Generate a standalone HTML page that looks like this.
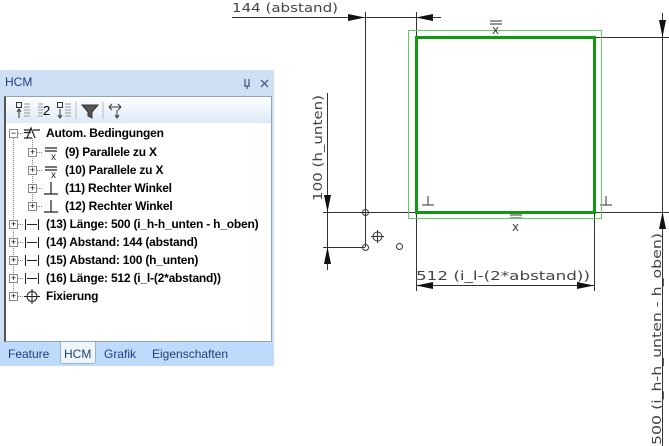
<!DOCTYPE html>
<html><head><meta charset="utf-8"><style>
*{margin:0;padding:0;box-sizing:border-box}
body{width:669px;height:446px;background:#fff;position:relative;overflow:hidden;font-family:"Liberation Sans","DejaVu Sans",sans-serif}
#panel{position:absolute;left:0;top:70px;width:274px;height:296px;background:#cfe0f4}
#title{position:absolute;left:5px;top:5px;font-size:12px;color:#1e3f78}
#body{position:absolute;left:4px;top:26px;width:268px;height:246px;background:#fff;border:1px solid #8fa3bd;border-left:2px solid #555}
#tool{height:26px;background:linear-gradient(#fff,#dde9f7);position:relative}
.row{position:absolute;font-size:12px;font-weight:bold;color:#000;white-space:nowrap;line-height:14px;letter-spacing:-0.2px}
.pm{position:absolute;width:9px;height:9px;border:1px solid #888;background:#fff;font-size:9px;line-height:7px;text-align:center;color:#000}
#tabs{position:absolute;left:0;top:272px;width:274px;height:24px;background:#bfdbfb;font-size:12px;color:#1e3f78}
#tabs span{position:absolute;top:5px}
.hcm{position:absolute;left:60px;top:0;width:36px;height:22px;background:#eef5fd;border:1px solid #9cb3d0;border-top:none;border-radius:0 0 3px 3px}
svg.cad text{font-family:"DejaVu Sans","Liberation Sans",sans-serif;font-size:12px;fill:#444}
</style></head><body>
<svg class="cad" width="669" height="446" style="position:absolute;left:0;top:0">
<g stroke="#333" stroke-width="1" fill="none">
<line x1="232" y1="17.5" x2="441" y2="17.5"/>
<line x1="365.5" y1="12" x2="365.5" y2="247"/>
<line x1="416.5" y1="12" x2="416.5" y2="291"/>
<line x1="594.5" y1="212" x2="594.5" y2="291"/>
<line x1="323" y1="212.5" x2="669" y2="212.5"/>
<line x1="594" y1="37.5" x2="669" y2="37.5"/>
<line x1="662.5" y1="13" x2="662.5" y2="446"/>
<line x1="327.5" y1="93" x2="327.5" y2="270"/>
<line x1="323" y1="247.5" x2="365" y2="247.5"/>
<line x1="416" y1="285.5" x2="594" y2="285.5"/>
<circle cx="365.5" cy="212.5" r="3"/>
<circle cx="365.5" cy="247.5" r="3"/>
<circle cx="399.5" cy="246.5" r="3"/>
<circle cx="377.5" cy="236.5" r="4.5"/>
<line x1="371" y1="236.5" x2="384" y2="236.5"/><line x1="377.5" y1="230" x2="377.5" y2="243"/>
<path d="M422 205H434M428 205V196"/><path d="M600 205H612M606 205V196"/>
<path d="M490 21H502M490 24H502"/><path d="M510 215H522M510 218H522"/>
</g>
<g fill="#111">
<path d="M348 14L365 17.5L348 21Z"/><path d="M433 14L416 17.5L433 21Z"/>
<path d="M659 20L662.5 37L666 20Z"/><path d="M659 229L662.5 212L666 229Z"/>
<path d="M324 195L327.5 212L331 195Z"/><path d="M324 264L327.5 247L331 264Z"/>
<path d="M433 282L416 285.5L433 289Z"/><path d="M577 282L594 285.5L577 289Z"/>
</g>
<rect x="408.5" y="30.5" width="193" height="188" fill="none" stroke="#66cc66" stroke-width="1"/>
<rect x="416.5" y="37.5" width="178" height="175" fill="none" stroke="#119911" stroke-width="3"/>
<text x="232" y="12" textLength="106" lengthAdjust="spacingAndGlyphs">144 (abstand)</text>
<text x="416" y="280" textLength="174" lengthAdjust="spacingAndGlyphs">512 (i_l-(2*abstand))</text>
<text x="492" y="34" font-size="11">x</text>
<text x="512" y="231" font-size="11">x</text>
<text transform="translate(322,201) rotate(-90)" textLength="106" lengthAdjust="spacingAndGlyphs">100 (h_unten)</text>
<text transform="translate(661,445) rotate(-90)" textLength="212" lengthAdjust="spacingAndGlyphs">500 (i_h-h_unten - h_oben)</text>
</svg>
<div id="panel">
<div id="title">HCM</div>
<svg width="30" height="14" style="position:absolute;left:242px;top:7px"><g stroke="#4a5f7f" stroke-width="1.3" fill="none"><path d="M3 2V9M7 2V9M2 9H8M5 9V12"/><path d="M19 3L26 10M26 3L19 10"/></g></svg>
<div id="body">
<div id="tool">
<svg width="130" height="26" style="position:absolute;left:8px;top:0"><g stroke="#333" fill="none" stroke-width="1">
<rect x="2.5" y="5.5" width="5" height="5"/><path d="M5 12V21M3 15L5 12L7 15"/><path d="M10 7H16M10 10H16M10 13H16M10 16H16M10 19H16" stroke="#999"/>
<path d="M24 7H29M24 10H29M24 13H29M24 16H29M24 19H29" stroke="#999"/>
<rect x="43.5" y="5.5" width="5" height="5"/><path d="M46 12V21M44 18L46 21L48 18"/><path d="M51 7H57M51 10H57M51 13H57M51 16H57M51 19H57" stroke="#999"/>
<path d="M62 5V22" stroke="#bbb"/><path d="M68 8H84L78 15V21L74 19V15Z" fill="#555"/><path d="M89 5V22" stroke="#bbb"/>
<path d="M95 10H107M95 10L98 7M95 10L98 13M107 10L104 7M107 10L104 13M103 13V21M101 18L103 21L105 18"/>
</g><text x="29" y="18" style="font-family:'Liberation Sans';font-size:13px;fill:#000">2</text></svg>
</div>
</div>
<div id="tabs"><div class="hcm"></div><span style="left:8px">Feature</span><span style="left:64px">HCM</span><span style="left:104px">Grafik</span><span style="left:152px">Eigenschaften</span></div>
</div>

<svg width="274" height="200" style="position:absolute;left:0;top:120px">
<g stroke="#888" stroke-dasharray="1 1" fill="none">
<path d="M13.5 18V176"/><path d="M32.5 18V86"/>
<path d="M18 13.5H23"/><path d="M37 32.5H42M37 50.5H42M37 68.5H42M37 86.5H42"/>
<path d="M18 104.5H23M18 122.5H23M18 140.5H23M18 158.5H23M18 176.5H23"/>
</g>
<g stroke="#222" fill="none" stroke-width="1.2">
<path d="M24 10H31M33 10H40M24 12.5H31M24 18H32M27 18L31 8L35 18"/>
<path d="M45 28H57M45 31H57"/><path d="M45 47H57M45 50H57"/>
<path d="M44 74H58M51 74V62"/><path d="M44 92H58M51 92V80"/>
</g>
<g fill="#222" font-family="Liberation Sans" font-size="10"><text x="51" y="40">x</text><text x="51" y="58">x</text></g>
<g stroke="#222" fill="none" stroke-width="1">
<path d="M25.5 99V110M38.5 99V110M27 104.5H37"/>
<path d="M25.5 117V128M38.5 117V128M27 122.5H37"/>
<path d="M25.5 135V146M38.5 135V146M27 140.5H37"/>
<path d="M25.5 153V164M38.5 153V164M27 158.5H37"/>
<circle cx="32" cy="176.5" r="5"/><path d="M24 176.5H40M32 169V184"/>
</g>
</svg>
<div class="pm" style="left:9px;top:129px">−</div>
<div class="row" style="left:46px;top:126px">Autom. Bedingungen</div>
<div class="pm" style="left:28px;top:148px">+</div><div class="row" style="left:65px;top:145px">(9) Parallele zu X</div>
<div class="pm" style="left:28px;top:166px">+</div><div class="row" style="left:65px;top:163px">(10) Parallele zu X</div>
<div class="pm" style="left:28px;top:184px">+</div><div class="row" style="left:65px;top:181px">(11) Rechter Winkel</div>
<div class="pm" style="left:28px;top:202px">+</div><div class="row" style="left:65px;top:199px">(12) Rechter Winkel</div>
<div class="pm" style="left:9px;top:220px">+</div><div class="row" style="left:46px;top:217px">(13) Länge: 500 (i_h-h_unten - h_oben)</div>
<div class="pm" style="left:9px;top:238px">+</div><div class="row" style="left:46px;top:235px">(14) Abstand: 144 (abstand)</div>
<div class="pm" style="left:9px;top:256px">+</div><div class="row" style="left:46px;top:253px">(15) Abstand: 100 (h_unten)</div>
<div class="pm" style="left:9px;top:274px">+</div><div class="row" style="left:46px;top:271px">(16) Länge: 512 (i_l-(2*abstand))</div>
<div class="pm" style="left:9px;top:292px">+</div><div class="row" style="left:46px;top:289px">Fixierung</div>
</body></html>
